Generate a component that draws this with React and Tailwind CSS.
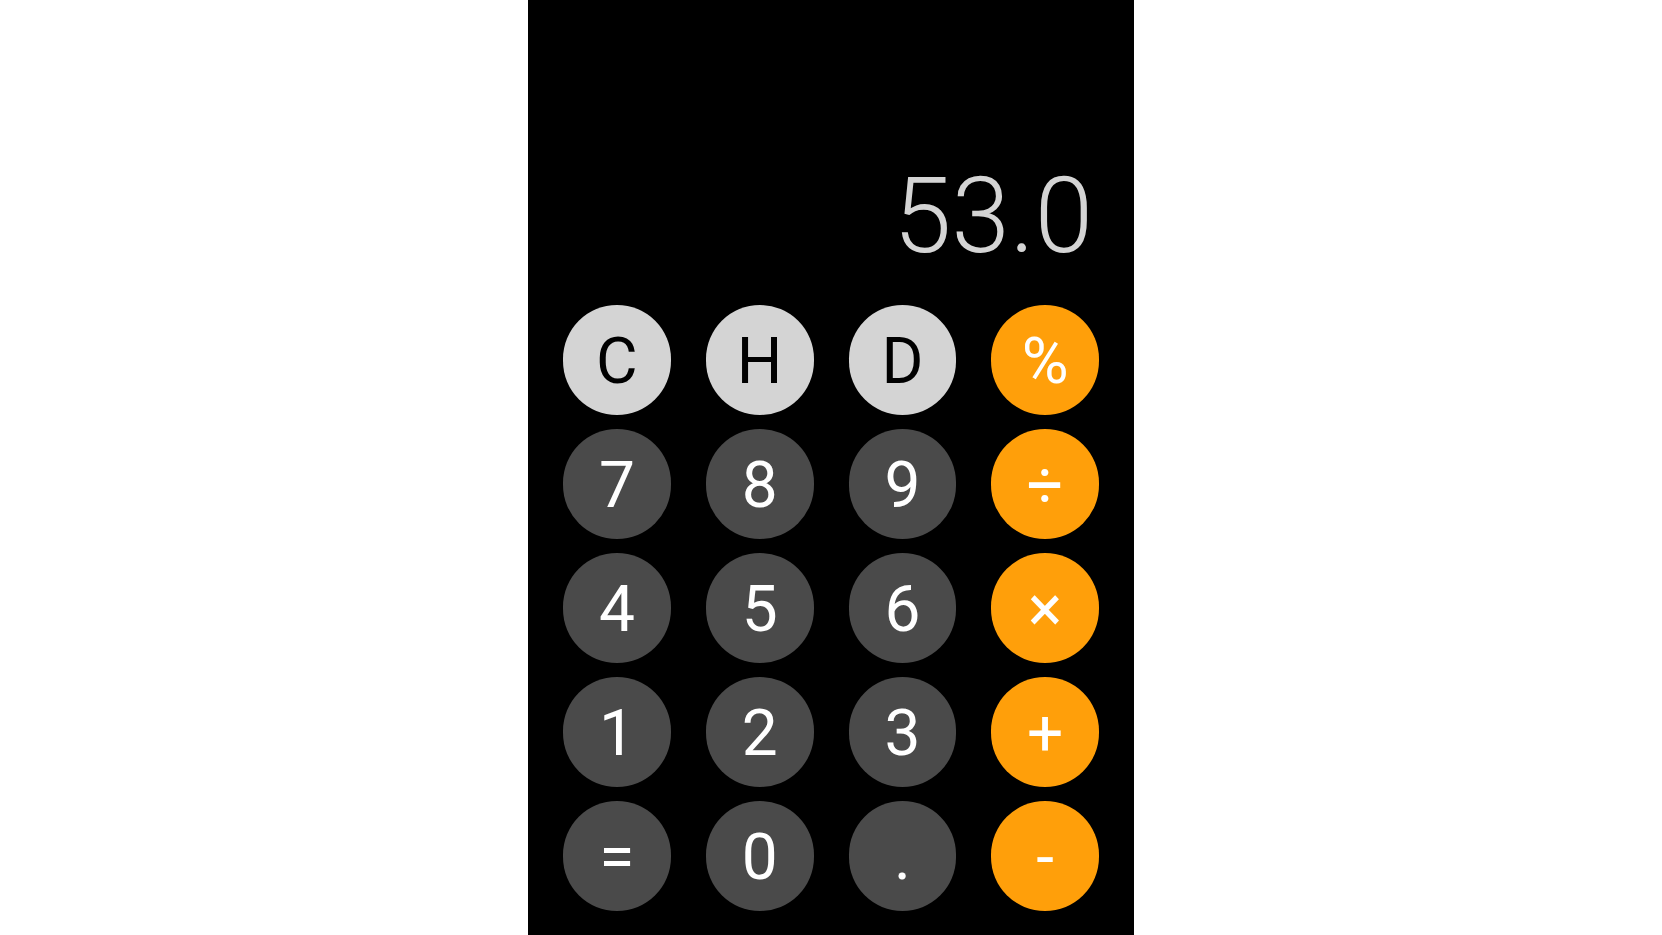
import React, { useState } from 'react';

const keys = [
  { label: 'C', type: 'fn' },
  { label: 'H', type: 'fn' },
  { label: 'D', type: 'fn' },
  { label: '%', type: 'op' },
  { label: '7' }, { label: '8' }, { label: '9' }, { label: '÷', type: 'op' },
  { label: '4' }, { label: '5' }, { label: '6' }, { label: '×', type: 'op' },
  { label: '1' }, { label: '2' }, { label: '3' }, { label: '+', type: 'op' },
  { label: '=' }, { label: '0' }, { label: '.' }, { label: '-', type: 'op' },
];

const styles = {
  fn: 'bg-[#d4d4d4] text-black',
  op: 'bg-[#ff9f0a] text-white',
  num: 'bg-[#4a4a4a] text-white',
};

const App = () => {
  const [display] = useState('53.0');

  return (
    <div className="min-h-screen bg-white" style={{ fontFamily: 'Roboto, "Liberation Sans", sans-serif' }}>
      <div className="mx-auto flex h-[935px] w-[606px] flex-col bg-black">
        {/* Display */}
        <div className="flex h-[305px] items-end justify-end pb-[36px] pr-[41px]">
          <span className="text-[105px] font-light leading-none text-[#d4d4d4]">{display}</span>
        </div>

        {/* Keypad */}
        <div className="grid grid-cols-4 gap-x-[35px] gap-y-[14px] px-[35px]">
          {keys.map((k) => (
            <button
              key={k.label}
              className={`flex h-[110px] w-full items-center justify-center rounded-full pt-[4px] text-[64px] font-normal leading-none ${styles[k.type || 'num']}`}
            >
              {k.label}
            </button>
          ))}
        </div>
      </div>
    </div>
  );
};

export default App;
